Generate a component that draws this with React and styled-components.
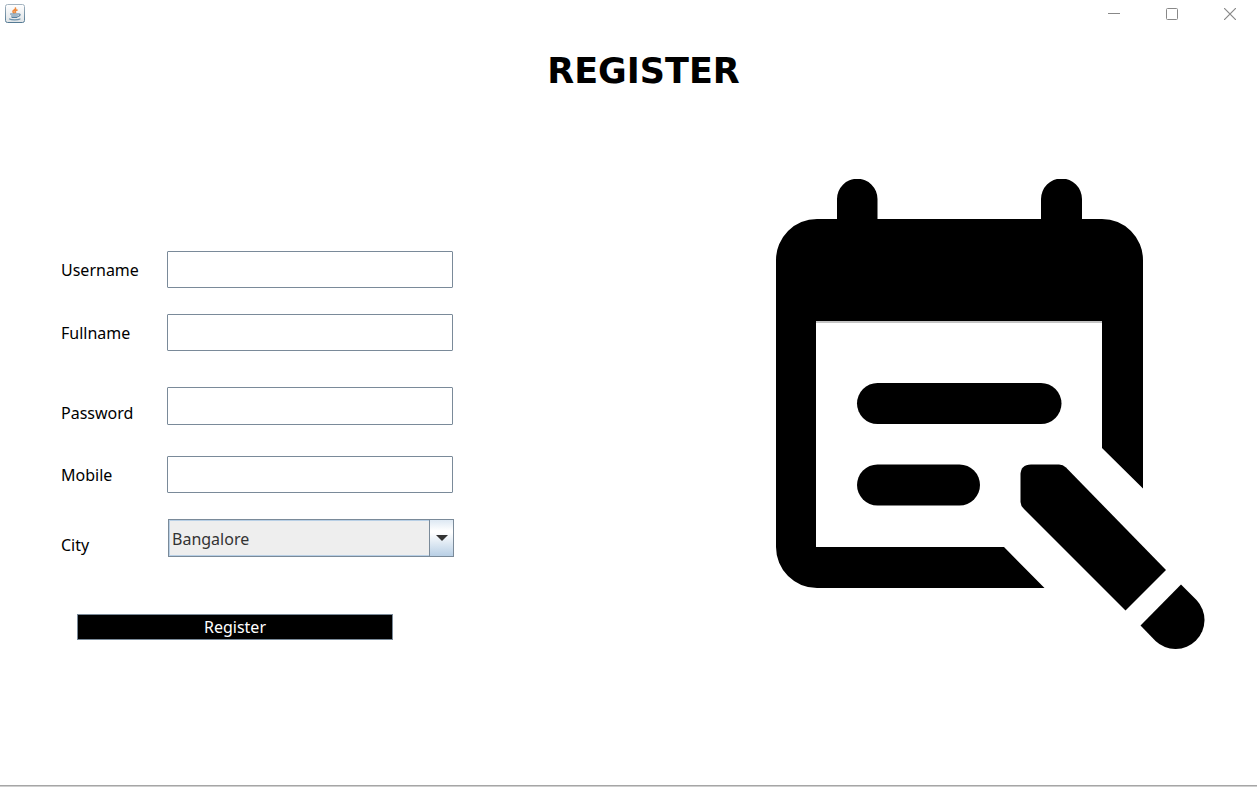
import React from "react";
import styled, { createGlobalStyle } from "styled-components";

const GlobalStyle = createGlobalStyle`
  * { box-sizing: border-box; }
  body {
    margin: 0;
    background: #fff;
    color: #000;
    font-family: "Noto Sans", sans-serif;
    font-size: 16px;
  }
`;

const Window = styled.div`
  display: flex;
  flex-direction: column;
  min-height: 100vh;
`;

const TitleBar = styled.header`
  display: flex;
  align-items: center;
  justify-content: space-between;
  height: 28px;
  padding-left: 5px;
`;

const WindowControls = styled.div`
  display: flex;
`;

const WindowButton = styled.button`
  display: grid;
  place-items: center;
  width: 58px;
  height: 28px;
  padding: 0 0 0 3px;
  border: 0;
  background: transparent;
`;

const Heading = styled.h1`
  margin: 21px 0 0;
  padding-left: 30px;
  text-align: center;
  font: bold 35px/44px "DejaVu Sans", sans-serif;
`;

const Content = styled.main`
  display: flex;
  flex: 1;
  align-items: flex-start;
  justify-content: space-between;
  gap: 40px;
  padding: 86px 52px 40px 61px;
`;

const Form = styled.form`
  display: flex;
  flex-direction: column;
  padding-top: 72px;
`;

const Row = styled.div`
  display: grid;
  grid-template-columns: 106px 286px;
  align-items: center;
  margin-bottom: ${(p) => p.$gap}px;
`;

const Label = styled.label`
  line-height: 20px;
  padding-top: ${(p) => (p.$low ? 14 : 0)}px;
`;

const TextField = styled.input`
  width: 100%;
  height: ${(p) => (p.$tall ? 38 : 37)}px;
  padding: 0 4px;
  border: 1px solid #7a8a99;
  border-radius: 1px;
  background: #fff;
  font: inherit;
  outline: none;
`;

const SelectBox = styled.div`
  display: grid;
  grid-template-columns: 1fr 25px;
  margin: 0 -1px 0 1px;
`;

const Select = styled.select`
  grid-area: 1 / 1 / 2 / 3;
  appearance: none;
  height: 38px;
  padding: 2px 28px 0 3px;
  border: 1px solid #7a8a99;
  border-radius: 0;
  background: #eee;
  box-shadow: inset 0 0 0 1px #b8cfe5;
  color: #333;
  font: inherit;
  outline: none;
`;

const SelectArrow = styled.span`
  grid-area: 1 / 2;
  display: grid;
  place-items: center;
  border: 1px solid #7a8a99;
  background: linear-gradient(#dde8f3, #fff 30%, #fff 35%, #b8cfe5);
  pointer-events: none;
`;

const SubmitButton = styled.button`
  width: 316px;
  height: 26px;
  margin-left: 16px;
  padding: 0;
  border: 1px solid #7a8a99;
  background: #000;
  color: #fff;
  font: inherit;
  line-height: 24px;
`;

const Art = styled.svg`
  flex: 0 1 429px;
  min-width: 0;
`;

const BottomEdge = styled.footer`
  height: 2px;
  border-top: 1px solid #a6a6a6;
  background: #cfcfcf;
`;

const fields = [
  { id: "username", label: "Username", type: "text", gap: 26 },
  { id: "fullname", label: "Fullname", type: "text", gap: 36 },
  { id: "password", label: "Password", type: "password", gap: 31, low: true, tall: true },
  { id: "mobile", label: "Mobile", type: "tel", gap: 26 },
];

function JavaIcon() {
  return (
    <svg width="20" height="20" viewBox="0 0 20 20" aria-hidden="true">
      <defs>
        <linearGradient id="tile" x2="0" y2="1">
          <stop offset="0" stopColor="#fff" />
          <stop offset="1" stopColor="#dfe3e6" />
        </linearGradient>
        <linearGradient id="rim" x2="0" y2="1">
          <stop offset="0" stopColor="#a3b3bf" />
          <stop offset="1" stopColor="#547a94" />
        </linearGradient>
      </defs>
      <rect x="0.5" y="0.5" width="19" height="18" rx="2" fill="url(#tile)" stroke="url(#rim)" />
      <g fill="none" strokeLinecap="round">
        <path d="M10.5 4c1 2-3.500 2-2.500 4l1 1M12 6c-2 1-2.500 1.500-1.500 2.500" stroke="#ee8a3c" strokeWidth="1.600" />
        <path d="M5.500 10h7.500M6.500 12h6M7 13.500h5M13.500 10c2.500-.5 2 2-.5 2.500" stroke="#557f9e" strokeWidth="1.100" />
        <path d="M4.500 15c2 1.200 8.500 1.200 10.500 0" stroke="#6f93ad" strokeWidth="1.200" />
      </g>
    </svg>
  );
}

function CalendarArt() {
  return (
    <Art viewBox="776 179 429 470" role="img" aria-label="Calendar with pencil">
      <path
        fillRule="evenodd"
        d="M776 260a41 41 0 0 1 41-41h20v-20a20 20 0 0 1 40.500 0v20H1041v-20a20 20 0 0 1 41 0v20h20a41 41 0 0 1 41 41V488.500L1102 448V321H816V547H1004L1044.500 588H817a41 41 0 0 1-41-41Z"
      />
      <rect x="816" y="321" width="286" height="2" fill="#c4c4c4" />
      <rect x="857" y="383" width="204.500" height="41" rx="20.500" />
      <rect x="857" y="464.500" width="123" height="41" rx="20.500" />
      <path d="M1031 464.500h28q4 0 7 3L1166 570l-40.500 40.500L1024 509q-3.500-3.500-3.500-7v-27q0-10.500 10.500-10.500Z" />
      <path d="M1181 584.500l15.500 15.500a29 29 0 0 1-41 41l-15-15.500Z" />
    </Art>
  );
}

export default function App() {
  return (
    <>
      <GlobalStyle />
      <Window>
        <TitleBar>
          <JavaIcon />
          <WindowControls>
            <WindowButton aria-label="Minimize">
              <svg width="12" height="12" stroke="#888" fill="none"><path d="M0 5.500h12" /></svg>
            </WindowButton>
            <WindowButton aria-label="Maximize">
              <svg width="12" height="12" stroke="#888" fill="none"><rect x=".5" y=".5" width="11" height="11" rx="1" /></svg>
            </WindowButton>
            <WindowButton aria-label="Close">
              <svg width="12" height="12" stroke="#888" strokeWidth="1.200" fill="none"><path d="M0 0l12 12M12 0L0 12" /></svg>
            </WindowButton>
          </WindowControls>
        </TitleBar>
        <Heading>REGISTER</Heading>
        <Content>
          <Form onSubmit={(e) => e.preventDefault()}>
            {fields.map((f) => (
              <Row key={f.id} $gap={f.gap}>
                <Label htmlFor={f.id} $low={f.low}>{f.label}</Label>
                <TextField id={f.id} type={f.type} $tall={f.tall} />
              </Row>
            ))}
            <Row $gap={57}>
              <Label htmlFor="city" $low>City</Label>
              <SelectBox>
                <Select id="city" defaultValue="Bangalore">
                  <option>Bangalore</option>
                </Select>
                <SelectArrow>
                  <svg width="12" height="6" aria-hidden="true"><path d="M0 0h12L6 6Z" fill="#333" /></svg>
                </SelectArrow>
              </SelectBox>
            </Row>
            <SubmitButton type="submit">Register</SubmitButton>
          </Form>
          <CalendarArt />
        </Content>
        <BottomEdge />
      </Window>
    </>
  );
}
